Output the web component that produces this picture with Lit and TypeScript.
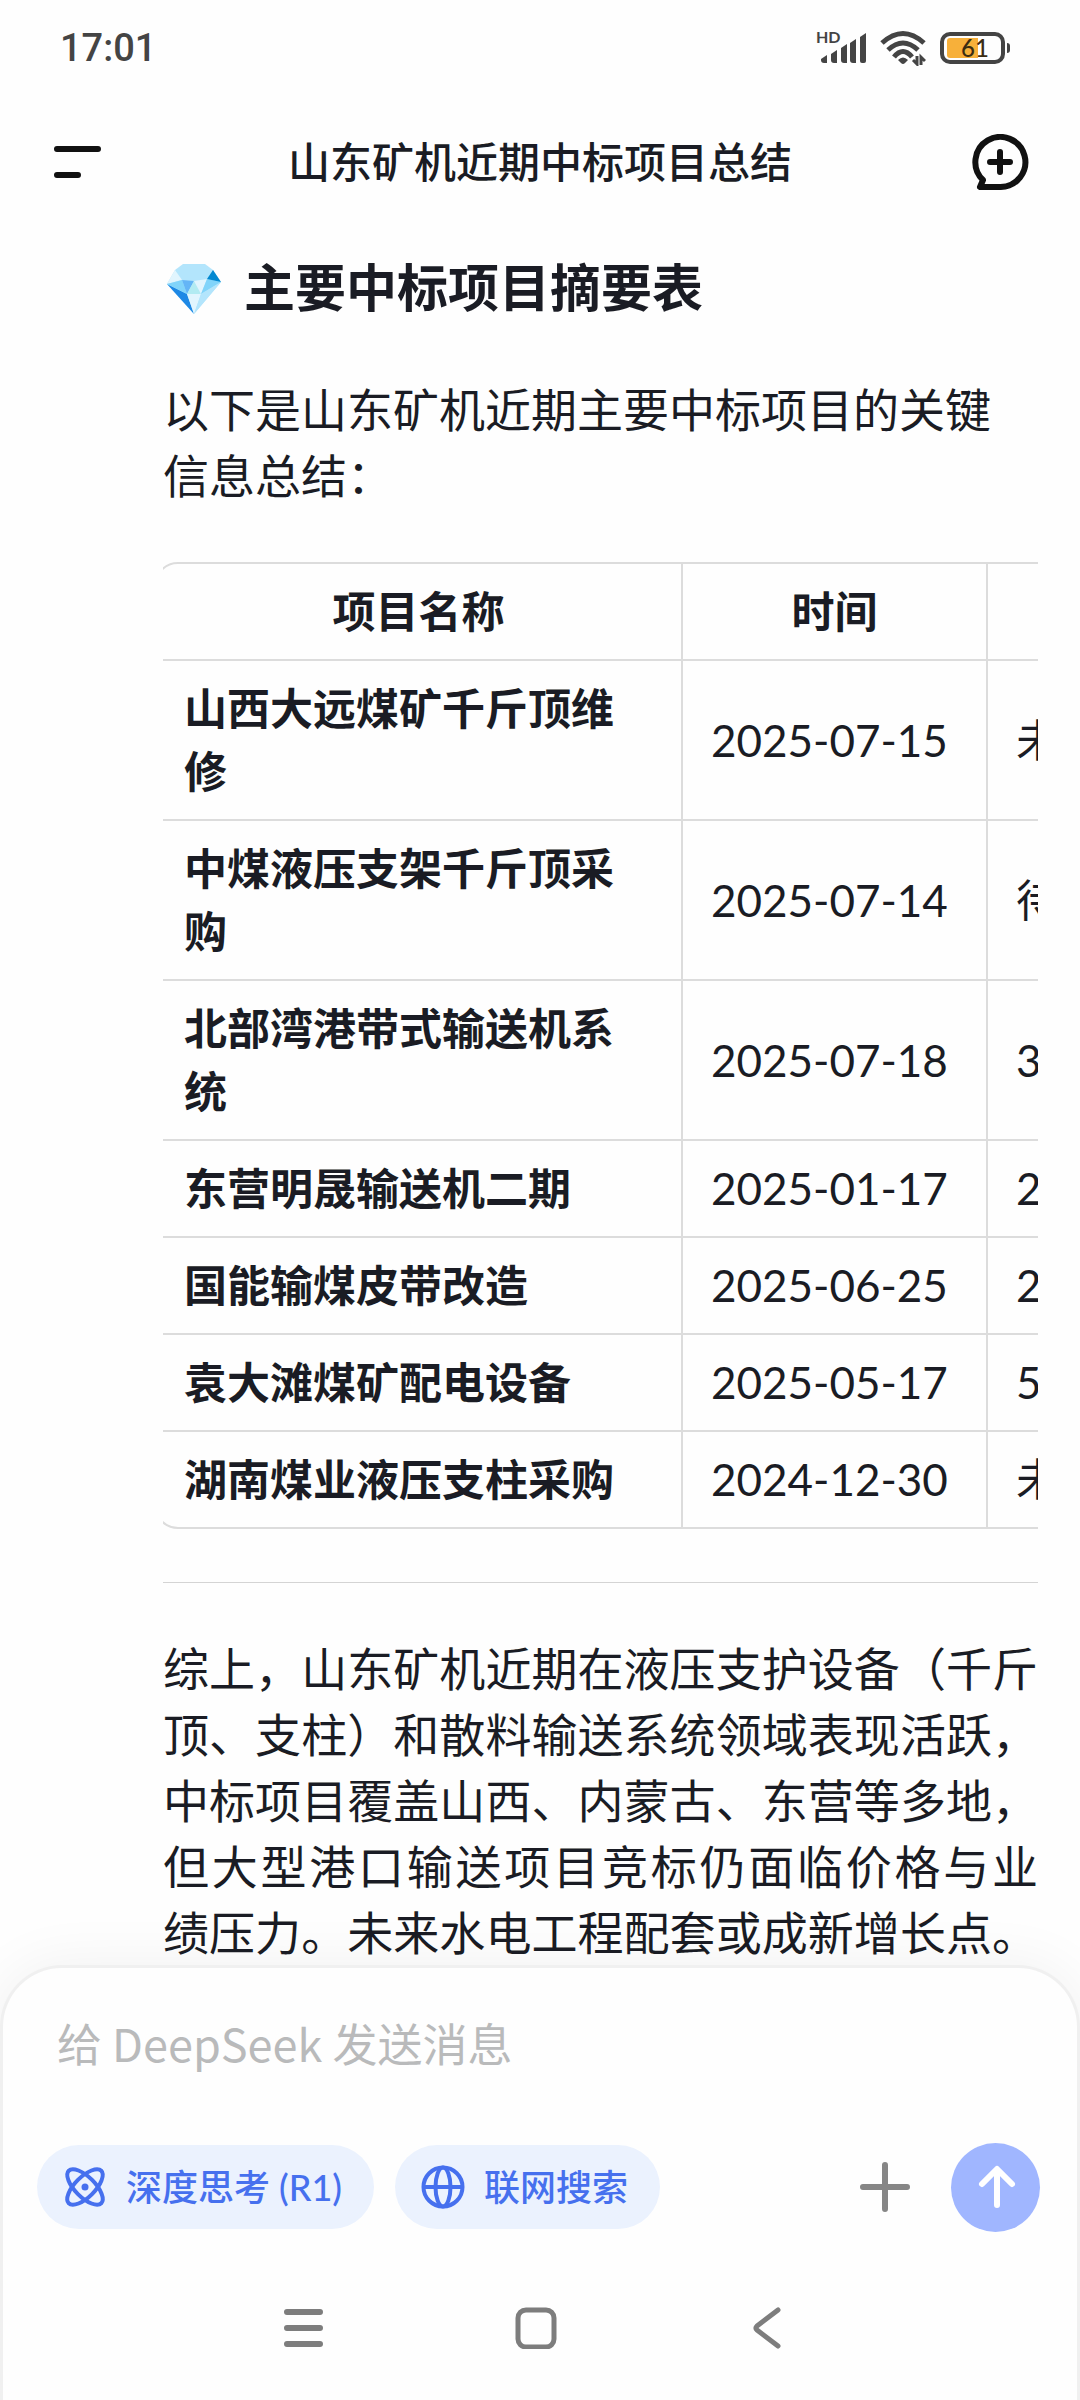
import { LitElement, html, css, svg } from "lit";
import { customElement, state } from "lit/decorators.js";

interface Row {
  name: string;
  date: string;
  amount: string;
}

const ROWS: Row[] = [
  { name: "山西大远煤矿千斤顶维修", date: "2025-07-15", amount: "未" },
  { name: "中煤液压支架千斤顶采购", date: "2025-07-14", amount: "待" },
  { name: "北部湾港带式输送机系统", date: "2025-07-18", amount: "3" },
  { name: "东营明晟输送机二期", date: "2025-01-17", amount: "2" },
  { name: "国能输煤皮带改造", date: "2025-06-25", amount: "2" },
  { name: "袁大滩煤矿配电设备", date: "2025-05-17", amount: "5" },
  { name: "湖南煤业液压支柱采购", date: "2024-12-30", amount: "未" },
];

const SUMMARY = [
  "综上，山东矿机近期在液压支护设备（千斤",
  "顶、支柱）和散料输送系统领域表现活跃，",
  "中标项目覆盖山西、内蒙古、东营等多地，",
  "但大型港口输送项目竞标仍面临价格与业",
  "绩压力。未来水电工程配套或成新增长点。",
];

@customElement("status-bar")
class StatusBar extends LitElement {
  static styles = css`
    :host {
      display: flex;
      align-items: center;
      justify-content: space-between;
      height: 96px;
      padding: 0 70px 0 60px;
      color: #444;
      font-family: Roboto, "Noto Sans CJK SC", sans-serif;
    }
    .time {
      font-size: 38px;
      font-weight: 500;
      line-height: 48px;
    }
    .icons {
      display: flex;
      align-items: center;
      gap: 12px;
    }
    svg {
      display: block;
    }
    .hd {
      font-family: Lato, sans-serif;
      font-weight: 700;
    }
    .level {
      font-family: Lato, sans-serif;
      font-weight: 500;
    }
  `;

  render() {
    return html`
      <span class="time">17:01</span>
      <span class="icons">
        <svg width="52" height="36" viewBox="0 0 52 36" fill="#444">
          <text class="hd" x="0" y="13" font-size="16">HD</text>
          <path d="M5 29 L11 25 V33 H8 Q5 33 5 30Z" />
          <path d="M15 24 L21 20 V33 H18 Q15 33 15 30Z" />
          <path d="M25 18 L31 14 V33 H28 Q25 33 25 30Z" />
          <path d="M34 13 L40 9 V33 H37 Q34 33 34 30Z" />
          <path d="M44 7 L50 3 V31 Q50 33 48 33 H46 Q44 33 44 31Z" />
        </svg>
        <svg width="46" height="36" viewBox="0 0 46 36" fill="none" stroke="#444" stroke-width="5">
          <path d="M2 13 Q23 -6 44 13" />
          <path d="M8 20 Q23 6 38 20" />
          <path d="M14 27 Q23 16 32 27" />
          <path d="M18 30 Q23 25 28 30 L25 33 Q23 35 21 33Z" fill="#444" stroke="none" />
          <path d="M37 26 V34 L33 30 M41 35 V27 L45 31" stroke-width="3" />
        </svg>
        <svg width="72" height="36" viewBox="0 0 72 36">
          <rect x="4" y="4" width="61" height="28" rx="8" fill="none" stroke="#444" stroke-width="4" />
          <path d="M12 8 H40 V28 H12 Q9 28 9 25 V11 Q9 8 12 8Z" fill="#f7b03a" />
          <path d="M69 13 Q72 13 72 16 V20 Q72 23 69 23Z" fill="#444" />
          <text class="level" x="23" y="27" font-size="24" fill="#3b2c12">61</text>
        </svg>
      </span>
    `;
  }
}

@customElement("app-root")
class AppRoot extends LitElement {
  @state() private deepThink = true;
  @state() private webSearch = true;

  static styles = css`
    :host {
      display: flex;
      flex-direction: column;
      height: 100vh;
      overflow: hidden;
      background: #fefefe;
      color: #1a1c24;
      font-family: Lato, "Noto Sans CJK SC", sans-serif;
    }
    svg {
      display: block;
      flex: none;
    }
    button {
      display: flex;
      align-items: center;
      justify-content: center;
      margin: 0;
      padding: 0;
      border: 0;
      background: none;
      color: inherit;
      font: inherit;
    }
    .bar {
      display: flex;
      align-items: center;
      justify-content: space-between;
      height: 132px;
      padding: 0 51px 0 53px;
    }
    .title {
      margin: 0;
      font-size: 42px;
      font-weight: 500;
      line-height: 60px;
    }
    .answer {
      flex: 1;
      min-height: 0;
      overflow: hidden;
      padding: 27px 42px 0 163px;
    }
    .heading {
      display: flex;
      align-items: center;
      gap: 19px;
      margin: 0 0 56px;
      font-size: 51px;
      font-weight: 700;
      line-height: 66px;
    }
    .text {
      margin: 0;
      font-size: 46px;
      line-height: 66px;
    }
    .intro {
      padding-right: 36px;
    }
    .summary {
      text-align: justify;
      text-align-last: justify;
    }
    .scroller {
      margin: 53px 0;
      overflow-x: auto;
      scrollbar-width: none;
    }
    .table {
      width: 1240px;
      margin-left: -9px;
      table-layout: fixed;
      border: 2px solid #dcdcdc;
      border-radius: 24px;
      border-collapse: separate;
      border-spacing: 0;
      line-height: 63px;
    }
    .name {
      width: 527px;
    }
    .date {
      width: 305px;
    }
    th,
    td {
      box-sizing: border-box;
      padding: 16px 28px;
      border-right: 2px solid #dcdcdc;
      border-bottom: 2px solid #dcdcdc;
      text-align: left;
    }
    th {
      font-size: 43px;
      font-weight: 700;
    }
    td {
      font-size: 44px;
    }
    thead th {
      text-align: center;
    }
    tr > :last-child {
      border-right: 0;
    }
    tbody tr:last-child > * {
      border-bottom: 0;
    }
    .rule {
      height: 1px;
      margin: 0 0 53px;
      border: 0;
      background: #d4d4d4;
    }
    .sheet {
      position: relative;
      border: 3px solid #f0f0f0;
      border-bottom: 0;
      border-radius: 62px 62px 0 0;
      background: #fefefe;
      box-shadow: 0 0 60px rgba(0, 0, 0, 0.06);
      padding: 42px 37px 0 34px;
    }
    .message {
      display: block;
      box-sizing: border-box;
      width: 100%;
      height: 66px;
      margin: 0;
      padding: 0 20px;
      border: 0;
      outline: 0;
      background: none;
      color: inherit;
      font: 45px/66px "Noto Sans CJK SC", sans-serif;
    }
    .message::placeholder {
      color: #b9babb;
      opacity: 1;
    }
    .tools {
      display: flex;
      align-items: center;
      height: 90px;
      margin-top: 66px;
    }
    .pill {
      height: 84px;
      gap: 19px;
      margin-right: 21px;
      padding: 0 32px 0 26px;
      border-radius: 42px;
      color: #616571;
      background: #f3f4f6;
      font: 500 36px/54px Lato, "Noto Sans CJK SC", sans-serif;
    }
    .pill.on {
      color: #4670ee;
      background: #ebf2fe;
    }
    .attach {
      margin-left: auto;
      color: #868686;
    }
    .send {
      width: 89px;
      height: 89px;
      margin-left: 40px;
      border-radius: 50%;
      background: #a0b6ff;
      color: #fff;
    }
    .nav {
      display: flex;
      justify-content: center;
      gap: 190px;
      height: 168px;
      padding: 75px 6px 0 0;
      box-sizing: border-box;
      align-items: flex-start;
      color: #7d7d7d;
    }
  `;

  private gem() {
    return html`<svg width="62" height="60" viewBox="0 0 62 60" aria-hidden="true">
      ${svg`
        <path d="M20 6 H42 L50 12 L58 24 L31 56 L4 26 L12 12Z" fill="#b3e5fc" />
        <path d="M12 12 L19 22 L4 26Z" fill="#e1f5fe" />
        <path d="M4 26 L24 36 L31 56Z" fill="#1e88e5" />
        <path d="M4 26 L19 22 L24 36Z" fill="#81d4fa" />
        <path d="M19 22 L31 23 L24 36Z" fill="#64b5f6" />
        <path d="M31 23 L38 36 H24Z" fill="#b2ebf2" />
        <path d="M31 23 L44 21 L38 36Z" fill="#e1f5fe" />
        <path d="M44 21 L58 24 L38 36Z" fill="#81d4fa" />
        <path d="M24 36 H38 L31 56Z" fill="#e1f5fe" />
        <path d="M38 36 L58 24 L31 56Z" fill="#b3e5fc" />
        <path d="M50 12 L58 24 L44 21Z" fill="#0288d1" />
      `}
    </svg>`;
  }

  render() {
    return html`
      <status-bar></status-bar>
      <header class="bar">
        <button aria-label="菜单">
          <svg width="56" height="40" viewBox="0 0 56 40" stroke="#111" stroke-width="6" stroke-linecap="round">
            <path d="M4 7 H45 M4 33 H25" />
          </svg>
        </button>
        <h1 class="title">山东矿机近期中标项目总结</h1>
        <button aria-label="新对话">
          <svg width="58" height="56" viewBox="0 0 58 56" fill="none" stroke="#111" stroke-width="6" stroke-linecap="round" stroke-linejoin="round">
            <path d="M29 53 A25 25 0 1 0 12 46 L9 53Z" />
            <path d="M29 18 V38 M19 28 H39" />
          </svg>
        </button>
      </header>

      <main class="answer">
        <h2 class="heading">${this.gem()}<span>主要中标项目摘要表</span></h2>
        <p class="text intro">以下是山东矿机近期主要中标项目的关键信息总结：</p>
        <div class="scroller">
          <table class="table">
            <colgroup>
              <col class="name" />
              <col class="date" />
              <col />
            </colgroup>
            <thead>
              <tr>
                <th scope="col">项目名称</th>
                <th scope="col">时间</th>
                <td></td>
              </tr>
            </thead>
            <tbody>
              ${ROWS.map(
                (row) => html`<tr>
                  <th scope="row">${row.name}</th>
                  <td>${row.date}</td>
                  <td>${row.amount}</td>
                </tr>`
              )}
            </tbody>
          </table>
        </div>
        <hr class="rule" />
        <p class="text summary">${SUMMARY.map((line, i) => (i ? html`<br />${line}` : line))}</p>
      </main>

      <footer class="sheet">
        <input class="message" type="text" placeholder="给 DeepSeek 发送消息" aria-label="给 DeepSeek 发送消息" />
        <div class="tools">
          <button
            class="pill ${this.deepThink ? "on" : ""}"
            aria-pressed=${this.deepThink}
            @click=${() => (this.deepThink = !this.deepThink)}
          >
            <svg width="44" height="44" viewBox="0 0 44 44" fill="none" stroke="currentColor" stroke-width="4">
              <ellipse cx="22" cy="22" rx="23" ry="10" transform="rotate(45 22 22)" />
              <ellipse cx="22" cy="22" rx="23" ry="10" transform="rotate(-45 22 22)" />
              <circle cx="22" cy="22" r="3.500" fill="currentColor" stroke="none" />
            </svg>
            <span>深度思考 (R1)</span>
          </button>
          <button
            class="pill ${this.webSearch ? "on" : ""}"
            aria-pressed=${this.webSearch}
            @click=${() => (this.webSearch = !this.webSearch)}
          >
            <svg width="44" height="44" viewBox="0 0 44 44" fill="none" stroke="currentColor" stroke-width="4">
              <circle cx="22" cy="22" r="19.500" />
              <ellipse cx="22" cy="22" rx="7.500" ry="19.500" />
              <path d="M2 22 H42" />
            </svg>
            <span>联网搜索</span>
          </button>
          <button class="attach" aria-label="添加">
            <svg width="52" height="52" viewBox="0 0 52 52" stroke="currentColor" stroke-width="6" stroke-linecap="round">
              <path d="M26 4 V48 M4 26 H48" />
            </svg>
          </button>
          <button class="send" aria-label="发送">
            <svg width="44" height="48" viewBox="0 0 44 48" fill="none" stroke="currentColor" stroke-width="6" stroke-linecap="round" stroke-linejoin="round">
              <path d="M23 42 V7 M8 21 L23 6 L38 21" />
            </svg>
          </button>
        </div>
        <nav class="nav">
          <button aria-label="最近任务">
            <svg width="42" height="42" viewBox="0 0 42 42" stroke="currentColor" stroke-width="6" stroke-linecap="round">
              <path d="M4 5 H37 M4 21 H37 M4 37 H37" />
            </svg>
          </button>
          <button aria-label="主屏幕">
            <svg width="42" height="42" viewBox="0 0 42 42" fill="none" stroke="currentColor" stroke-width="5">
              <rect x="3" y="3" width="36" height="37" rx="8" />
            </svg>
          </button>
          <button aria-label="返回">
            <svg width="42" height="42" viewBox="0 0 42 42" fill="none" stroke="currentColor" stroke-width="5" stroke-linecap="round" stroke-linejoin="round">
              <path d="M31 3 L10 19 Q8 21 10 23 L31 39" />
            </svg>
          </button>
        </nav>
      </footer>
    `;
  }
}
